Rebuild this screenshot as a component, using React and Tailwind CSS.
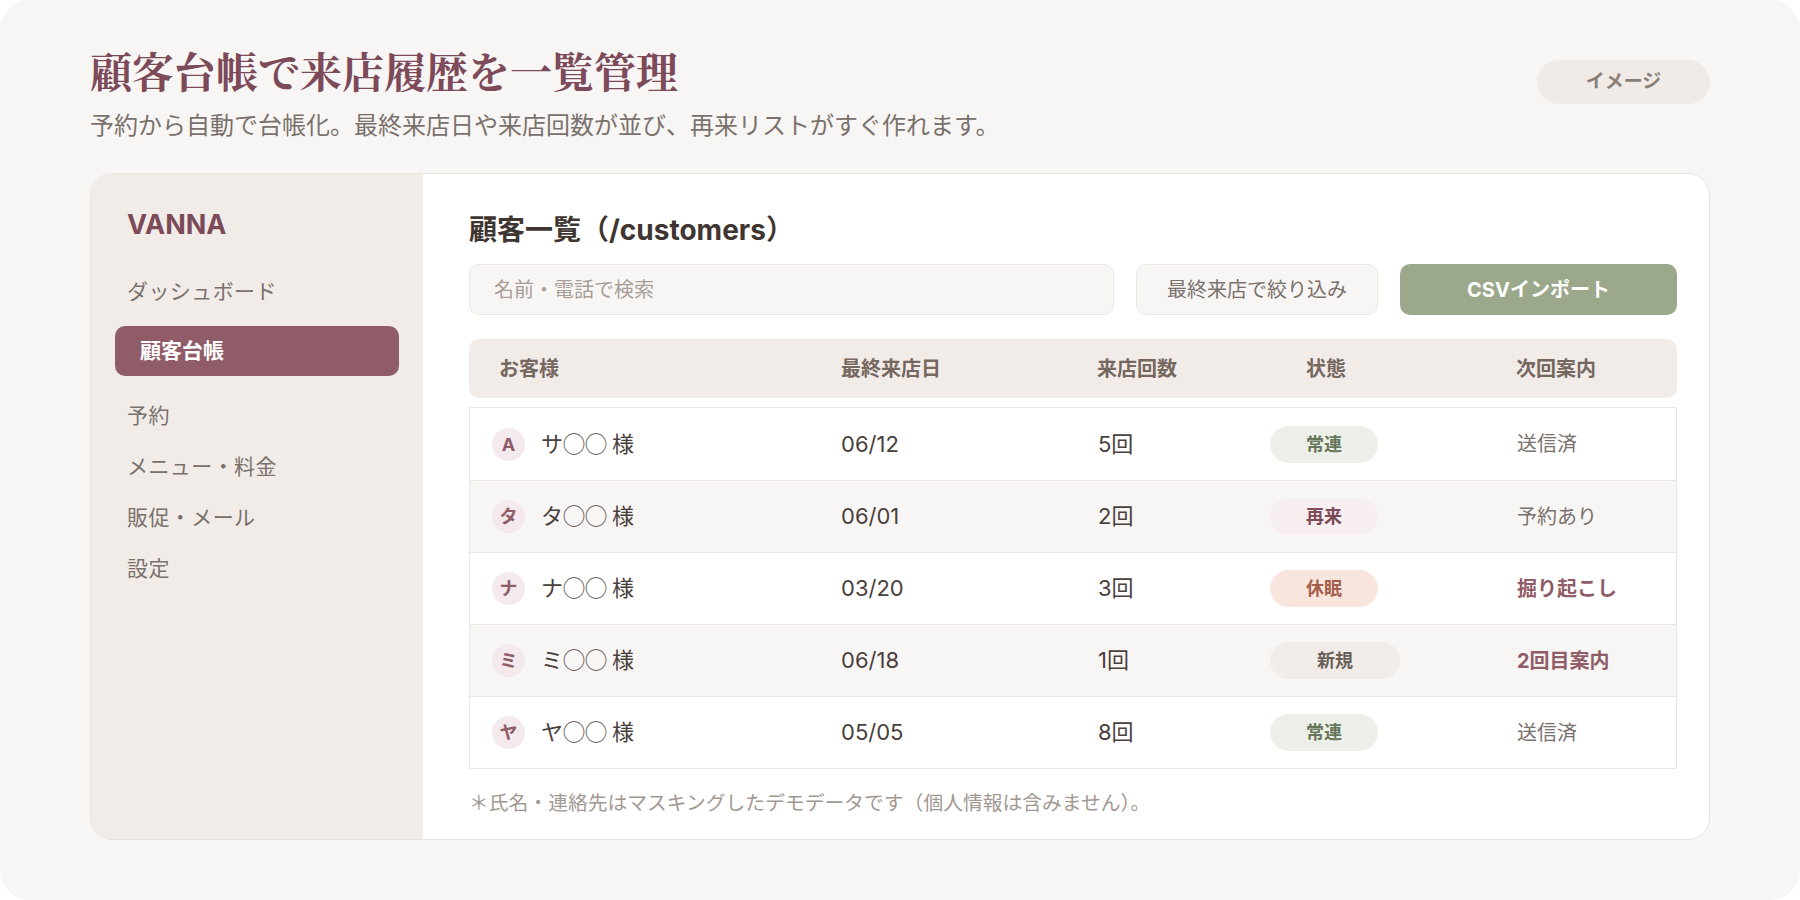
import React from 'react';

const navItems = ['ダッシュボード', '顧客台帳', '予約', 'メニュー・料金', '販促・メール', '設定'];

const badgeStyles = {
  常連: 'bg-[#edf0e8] text-[#66765a] w-[108px]',
  再来: 'bg-[#f7eef0] text-[#7d4a58] w-[108px]',
  休眠: 'bg-[#f8e6de] text-[#a35f4b] w-[108px]',
  新規: 'bg-[#f1ece8] text-[#6a605a] w-[130px]',
};

const customers = [
  { initial: 'A', name: 'サ◯◯ 様', last: '06/12', count: '5回', status: '常連', next: '送信済', strong: false },
  { initial: 'タ', name: 'タ◯◯ 様', last: '06/01', count: '2回', status: '再来', next: '予約あり', strong: false },
  { initial: 'ナ', name: 'ナ◯◯ 様', last: '03/20', count: '3回', status: '休眠', next: '掘り起こし', strong: true },
  { initial: 'ミ', name: 'ミ◯◯ 様', last: '06/18', count: '1回', status: '新規', next: '2回目案内', strong: true },
  { initial: 'ヤ', name: 'ヤ◯◯ 様', last: '05/05', count: '8回', status: '常連', next: '送信済', strong: false },
];

const cols = 'grid grid-cols-[372px_256px_172px_247px_1fr] items-center';

function App() {
  return (
    <div className="min-h-screen bg-white font-['Inter','Noto_Sans_CJK_JP',sans-serif]">
      <div className="h-[900px] rounded-[30px] bg-[#f8f6f4] px-[90px] pt-[42px]">
        <div className="flex items-start justify-between">
          <div>
            <h1 className="font-['Noto_Serif_CJK_JP','Noto_Sans_CJK_JP',serif] text-[42px] leading-[56px] font-bold text-[#7d4a5a]">
              顧客台帳で来店履歴を一覧管理
            </h1>
            <p className="mt-[12px] text-[24px] leading-[32px] text-[#7a716c]">
              予約から自動で台帳化。最終来店日や来店回数が並び、再来リストがすぐ作れます。
            </p>
          </div>
          <div className="mt-[18px] flex h-[44px] w-[173px] items-center justify-center rounded-full bg-[#f0ebe7] text-[19px] font-bold text-[#8a7f78]">
            イメージ
          </div>
        </div>

        <div className="mt-[31px] flex h-[667px] overflow-hidden rounded-[22px] border border-[#e9e3de] bg-white">
          <aside className="w-[332px] shrink-0 bg-[#f1ece8] px-[24px] pt-[31px]">
            <div className="pl-[12px] text-[27px] font-bold text-[#7d4a5a]">VANNA</div>
            <nav className="mt-[22px] flex flex-col gap-[2px]">
              {navItems.map((item) =>
                item === '顧客台帳' ? (
                  <div
                    key={item}
                    className="mb-[14px] mt-[7px] flex h-[50px] items-center rounded-[10px] bg-[#8f5c68] pl-[25px] text-[21px] font-bold text-white"
                  >
                    {item}
                  </div>
                ) : (
                  <div key={item} className="flex h-[49px] items-center pl-[12px] text-[21px] tracking-[0.02em] text-[#7a716c]">
                    {item}
                  </div>
                )
              )}
            </nav>
          </aside>

          <main className="flex-1 pl-[46px] pr-[32px] pt-[36px]">
            <h2 className="text-[28px] leading-[40px] font-bold text-[#3f3531]">顧客一覧（/customers）</h2>

            <div className="mt-[14px] flex gap-[22px]">
              <div className="flex h-[51px] flex-1 items-center rounded-[10px] border border-[#ece6e1] bg-[#f8f6f4] pl-[24px] text-[20px] text-[#a89e97]">
                名前・電話で検索
              </div>
              <button className="h-[51px] w-[242px] rounded-[10px] border border-[#ece6e1] bg-[#f8f6f4] text-[20px] text-[#7a716c]">
                最終来店で絞り込み
              </button>
              <button className="h-[51px] w-[277px] rounded-[10px] bg-[#9ca88c] text-[20px] font-bold text-white">
                CSVインポート
              </button>
            </div>

            <div className={`${cols} mt-[24px] h-[59px] rounded-[10px] bg-[#f1ece8] text-[20px] font-bold text-[#76675f]`}>
              <div className="pl-[30px]">お客様</div>
              <div>最終来店日</div>
              <div>来店回数</div>
              <div className="pl-[37px]">状態</div>
              <div>次回案内</div>
            </div>

            <div className="mt-[9px] border border-[#ece6e1]">
              {customers.map((c, i) => (
                <div
                  key={c.initial}
                  className={`${cols} h-[72px] text-[22px] text-[#4a403c] ${i > 0 ? 'border-t border-[#ece6e1]' : ''} ${
                    i % 2 === 1 ? 'bg-[#f8f6f4]' : 'bg-white'
                  }`}
                >
                  <div className="flex items-center pl-[22px]">
                    <span className="flex h-[33px] w-[33px] items-center justify-center rounded-full bg-[#f4e9ec] text-[18px] font-bold text-[#8f5c68]">
                      {c.initial}
                    </span>
                    <span className="-mt-[4px] ml-[16px] font-['Noto_Sans_CJK_JP',sans-serif]">{c.name}</span>
                  </div>
                  <div className="-ml-px">{c.last}</div>
                  <div>{c.count}</div>
                  <div>
                    <span
                      className={`flex h-[37px] items-center justify-center rounded-full text-[18px] font-bold ${badgeStyles[c.status]}`}
                    >
                      {c.status}
                    </span>
                  </div>
                  <div className={`text-[20px] ${c.strong ? 'font-bold text-[#8f5c68]' : 'text-[#7a716c]'}`}>{c.next}</div>
                </div>
              ))}
            </div>

            <p className="mt-[20px] text-[19.8px] text-[#a39891]">
              ＊氏名・連絡先はマスキングしたデモデータです（個人情報は含みません）。
            </p>
          </main>
        </div>
      </div>
    </div>
  );
}

export default App;
